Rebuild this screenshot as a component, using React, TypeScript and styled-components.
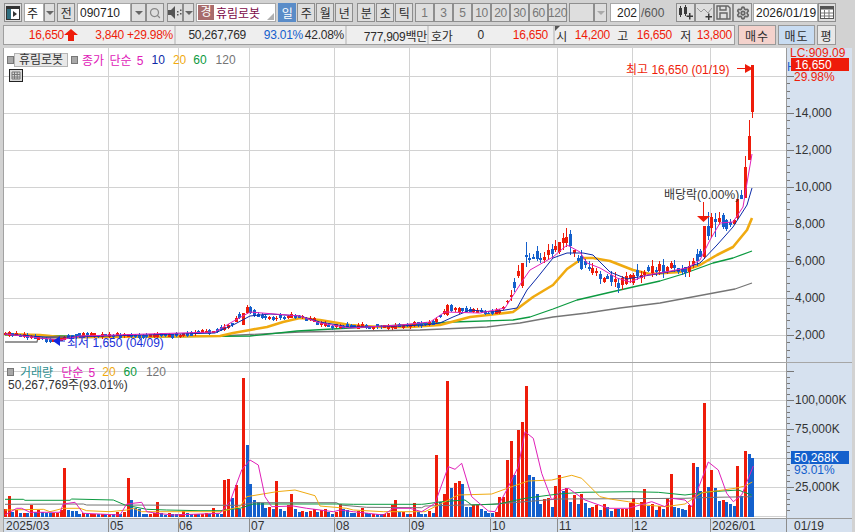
import React from 'react'
import styled, { createGlobalStyle } from 'styled-components'
import { Search, Settings } from 'lucide-react'

const GlobalStyle = createGlobalStyle`
  html, body { margin: 0; padding: 0; }
  body {
    background: #d2d2d2;
    font-family: "Liberation Sans", "Noto Sans CJK KR", sans-serif;
    font-size: 12px;
    color: #2c2c2c;
  }
  svg text { font-family: "Liberation Sans", "Noto Sans CJK KR", sans-serif; }
`

const RED = '#ee1c0a'
const BLUE = '#1460cc'
const MAGENTA = '#e020b8'
const NAVY = '#0c2aa8'
const ORANGE = '#f0aa10'
const GREEN = '#0c9a40'
const GRAY = '#757575'

const Screen = styled.div`
  width: 855px;
  height: 532px;
  overflow: hidden;
  display: flex;
  flex-direction: column;
  background: #d2d2d2;
`

const Toolbar = styled.div`
  display: flex;
  align-items: stretch;
  height: 19px;
  margin-top: 3px;
  padding-left: 4px;
`

const Btn = styled.div<{ $w: number; $ml?: number; $active?: boolean; $off?: boolean }>`
  width: ${p => p.$w}px;
  margin-left: ${p => p.$ml ?? 0}px;
  flex: none;
  box-sizing: border-box;
  display: flex;
  align-items: center;
  justify-content: center;
  border: 1px solid ${p => (p.$active ? '#5a8cc8' : '#8e8e8e')};
  background: ${p => (p.$active ? '#5a8cc8' : '#dedede')};
  color: ${p => (p.$active ? '#fff' : p.$off ? '#777' : '#2c2c2c')};
  font-size: 12px;
  letter-spacing: -0.4px;
  white-space: nowrap;
`

const Field = styled.div<{ $w: number; $ml?: number; $end?: boolean }>`
  width: ${p => p.$w}px;
  margin-left: ${p => p.$ml ?? 0}px;
  flex: none;
  box-sizing: border-box;
  display: flex;
  align-items: center;
  justify-content: ${p => (p.$end ? 'flex-end' : 'flex-start')};
  padding: 0 2px;
  background: #fff;
  border: 1px solid #a8a8a8;
  color: #222;
`

const Caret = styled.span<{ $pale?: boolean }>`
  width: 0;
  height: 0;
  border-left: 4px solid transparent;
  border-right: 4px solid transparent;
  border-top: 4px solid ${p => (p.$pale ? '#aaa' : '#666')};
`

const NameBox = styled.div`
  width: 80px;
  margin-left: 2px;
  flex: none;
  box-sizing: border-box;
  display: flex;
  align-items: center;
  gap: 2px;
  position: relative;
  background: #fff;
  border: 1px solid #a8a8a8;
  color: #7c0a48;
  &::after {
    content: '';
    position: absolute;
    right: 1px;
    bottom: 1px;
    border-left: 7px solid transparent;
    border-bottom: 7px solid #b0b0b0;
  }
`

const Badge = styled.span`
  width: 16px;
  height: 15px;
  margin-left: 1px;
  background: #a86c6c;
  color: #fff;
  text-align: center;
  line-height: 15px;
`

const PlainText = styled.span`
  margin-left: 1px;
  width: 34px;
  color: #555;
  display: flex;
  align-items: center;
  flex: none;
`

const QuoteRow = styled.div`
  display: flex;
  align-items: stretch;
  height: 20px;
  margin-top: 3px;
  padding-left: 3px;
`

const QuoteBar = styled.div`
  width: 732px;
  flex: none;
  box-sizing: border-box;
  display: flex;
  background: #eeeeee;
  border: 1px solid #9e9e9e;
`

const QuoteCell = styled.div<{ $w: number; $last?: boolean }>`
  width: ${p => p.$w}px;
  flex: none;
  box-sizing: border-box;
  display: flex;
  align-items: center;
  border-right: ${p => (p.$last ? 'none' : '2px solid #cfcfcf')};
  position: relative;
`

const Val = styled.span<{ $w: number; $c?: string; $left?: boolean }>`
  width: ${p => p.$w}px;
  flex: none;
  box-sizing: border-box;
  padding-left: ${p => (p.$left ? 2 : 0)}px;
  text-align: ${p => (p.$left ? 'left' : 'right')};
  color: ${p => p.$c ?? '#2c2c2c'};
  letter-spacing: -0.25px;
  white-space: nowrap;
`

const CornerMark = styled.span`
  position: absolute;
  left: 0;
  top: 0;
  border-right: 5px solid transparent;
  border-top: 5px solid #555;
`

const TradeBtn = styled.div<{ $bg: string; $w: number; $ml: number }>`
  width: ${p => p.$w}px;
  margin-left: ${p => p.$ml}px;
  flex: none;
  box-sizing: border-box;
  display: flex;
  align-items: center;
  justify-content: center;
  background: ${p => p.$bg};
  border: 1px solid #999;
  letter-spacing: 1px;
`

const ChartFrame = styled.div`
  flex: 1;
  margin-top: 3px;
  margin-left: 3px;
  margin-right: 3px;
  border-left: 1px solid #a2a2a2;
  display: flex;
  flex-direction: column;
  min-height: 0;
`

const Pane = styled.div<{ $h: number; $sep?: boolean }>`
  height: ${p => p.$h}px;
  flex: none;
  display: flex;
  position: relative;
  background: #fff;
  border-bottom: ${p => (p.$sep ? '1px solid #a6a6a6' : 'none')};
`

const Plot = styled.svg`
  display: block;
  width: 782px;
  height: 100%;
  flex: none;
`

const AxisSvg = styled.svg`
  display: block;
  width: 66px;
  height: 100%;
  flex: none;
  background: #d6e1ef;
  border-left: 1px solid #9a9a9a;
  box-sizing: border-box;
`

const DateStrip = styled.svg`
  display: block;
  width: 848px;
  height: 13px;
  flex: none;
  background: #d6e1ef;
  border-top: 1px solid #9a9a9a;
  box-sizing: content-box;
`

const Legend = styled.div<{ $top: number; $left: number }>`
  position: absolute;
  top: ${p => p.$top}px;
  left: ${p => p.$left}px;
  display: flex;
  align-items: center;
  gap: 6px;
  white-space: nowrap;
`

const Dot = styled.span`
  width: 5px;
  height: 6px;
  box-sizing: content-box;
  background: #a8a8a8;
  border: 1px solid #777;
  flex: none;
  margin-right: -2px;
`

const NameTag = styled.span`
  width: 54px;
  height: 14px;
  box-sizing: border-box;
  margin: 0 -3px 0 -4px;
  background: #e8e8e8;
  border: 1px solid #b4b4b4;
  text-align: center;
  line-height: 12px;
  color: #333;
`

const LegendText = styled.span<{ $c: string; $gap?: number }>`
  color: ${p => p.$c};
  margin-left: ${p => p.$gap ?? 0}px;
  word-spacing: 2px;
`

const TableIcon = styled.svg`
  position: absolute;
  top: 21px;
  left: 5px;
`

const Note = styled.div<{ $top: number; $left: number; $c?: string }>`
  position: absolute;
  top: ${p => p.$top}px;
  left: ${p => p.$left}px;
  color: ${p => p.$c ?? '#333'};
  white-space: nowrap;
`

/* volume bars read off the chart, + up day, - down day */
const VOL = [
  8, 21, -5, 7, -4, 4, -4, 12, -5, 7, -5, -4, -4, 4, 4, 7, 49, -7, -6, -6, -3, 4, -3, 3, 3, -3, 3, -3, 3, -3, 5, -3, 5, 39,
  -17, -9, -8, -3, -3, 3, 4, 15, -4, -2, 4, -3, -3, 3, 6, -4, -3, 3, -3, 3, 4, -3, 9, -3, -3, 37, 38, -19, 32, -8, 139, -72,
  -33, -17, -15, -14, -9, 10, -8, 36, -8, -6, 12, 23, -8, -5, 6, -5, 6, 8, -5, 7, 8, -5, -3, 5, 13, -8, -7, -4, -4, 6, 9, -4,
  -3, 3, -3, -3, 3, 4, 12, 17, -5, 5, -3, 3, 14, -5, -3, -3, 6, -4, 62, -15, 23, 136, -29, 34, 36, -33, -10, -10, 12, 12, -8,
  -6, -4, -4, 5, 20, 20, 57, 76, -42, 87, 95, 131, -42, -40, -23, -13, 18, 19, -10, 31, 42, -26, 29, -15, 22, -13, 23, -14,
  -9, 10, 12, -7, 13, -10, -6, 8, -8, 8, 8, 14, 19, -7, 15, 28, -11, 13, -7, 11, -8, 19, 43, -10, -9, -8, -7, 12, 54, -50,
  -26, 114, -30, 47, -29, -16, 17, -15, -13, -11, 51, -21, 66, -63, -59,
]
const barX = (i: number) => 5 + (i * 747.3) / (VOL.length - 1)

type Pt = [number, number]

const CLOSE: Pt[] = [
  [5, 335], [20, 335], [50, 340], [55, 342], [65, 337], [80, 335], [130, 336], [178, 335], [215, 331], [230, 325], [245, 311],
  [255, 314], [270, 318], [300, 316], [310, 320], [330, 326], [380, 327], [410, 325], [435, 323], [447, 309], [470, 310],
  [490, 314], [500, 312], [510, 298], [520, 270], [530, 258], [545, 258], [555, 246], [568, 240], [575, 255], [590, 268],
  [605, 278], [620, 283], [632, 278], [650, 269], [670, 268], [690, 267], [698, 258], [706, 240], [725, 222], [735, 218],
  [753, 100],
]

const lerp = (pts: Pt[], x: number) => {
  for (let k = 1; k < pts.length; k++) {
    if (x <= pts[k][0]) {
      const [x0, y0] = pts[k - 1]
      const [x1, y1] = pts[k]
      return y0 + ((y1 - y0) * (x - x0)) / (x1 - x0)
    }
  }
  return pts[pts.length - 1][1]
}
const noise = (i: number, s: number) => {
  const v = Math.sin(i * 12.9898 + s * 78.233) * 43758.5453
  return v - Math.floor(v)
}

// x, body top, body bottom, wick top, wick bottom, up
const BIG: [number, number, number, number, number, boolean][] = [
  [752.3, 65, 112, 65, 118, true],
  [748.6, 136, 160, 120, 160, true],
  [744.9, 167, 198, 156, 198, true],
  [740.9, 195, 199, 190, 199, false],
  [737.4, 199, 218, 199, 220, true],
  [733.4, 220, 224, 219, 225, true],
  [730, 222, 225, 219, 227, false],
  [726, 220, 229, 219, 231, false],
  [722.3, 215, 227, 213, 229, false],
  [718.3, 218, 222, 212, 225, true],
  [714.4, 219, 222, 213, 237, false],
  [711, 217, 228, 213, 238, true],
  [707, 226, 236, 212, 240, false],
  [703, 226, 257, 226, 259, true],
  [521, 263, 286, 263, 288, true],
  [525, 255, 257, 242, 267, false],
  [558, 242, 252, 242, 254, true],
  [562, 238, 243, 233, 250, true],
  [566, 237, 243, 228, 247, true],
  [569, 234, 246, 230, 255, false],
  [581.7, 256, 269, 250, 270, false],
  [446.7, 305, 315, 304, 316, true],
  [450.5, 305, 311, 304, 312, false],
  [241.6, 313, 325, 313, 325, true],
  [245.7, 307, 313, 305, 314, true],
  [249.5, 307, 313, 306, 314, false],
  [254, 310, 316, 309, 317, false],
]

const candles = VOL.map((v, i) => {
  const x = barX(i)
  const big = BIG.find(b => Math.abs(b[0] - x) < 1.9)
  if (big) return { x, top: big[1], bot: big[2], hi: big[3], lo: big[4], up: big[5] }
  const c = lerp(CLOSE, x)
  const amp = c < 300 ? 1.4 : 0.45
  const h = 0.8 + noise(i, 1) * 2.4 * amp
  const shift = (noise(i, 2) - 0.5) * 5 * amp
  return {
    x,
    top: c + shift - h,
    bot: c + shift + h,
    hi: c + shift - h - noise(i, 3) * 5 * amp,
    lo: c + shift + h + noise(i, 4) * 4 * amp,
    up: v > 0,
  }
})

const MA5: Pt[] = [
  [5, 334], [40, 338], [60, 340], [80, 336], [215, 332], [232, 322], [250, 312], [262, 313], [300, 316], [320, 323], [350, 328],
  [400, 325], [430, 322], [445, 312], [480, 313], [505, 308], [523, 280], [530, 270], [553, 257], [567, 245], [580, 252],
  [587, 263], [600, 268], [617, 278], [630, 282], [647, 275], [665, 272], [687, 268], [700, 260], [710, 240], [720, 223],
  [733, 222], [743, 207], [748, 177], [752, 154],
]
const MA10: Pt[] = [
  [5, 334], [45, 337], [70, 337], [215, 333], [235, 324], [250, 316], [270, 314], [300, 316], [320, 322], [350, 327], [400, 326],
  [425, 325], [440, 323], [453, 317], [470, 310], [493, 312], [517, 308], [527, 290], [537, 278], [553, 258], [567, 253],
  [583, 253], [593, 255], [610, 272], [627, 279], [650, 275], [680, 270], [700, 263], [717, 245], [733, 227], [747, 205],
  [752, 188],
]
const MA20: Pt[] = [
  [5, 334], [40, 335], [60, 337], [100, 337], [220, 336], [233, 333], [250, 330], [267, 327], [283, 322], [300, 318], [320, 320],
  [350, 325], [380, 327], [410, 327], [440, 325], [470, 317], [497, 314], [513, 312], [533, 297], [553, 285], [567, 269],
  [583, 258], [593, 258], [610, 261], [633, 270], [650, 274], [680, 272], [700, 265], [717, 255], [733, 247], [747, 230],
  [752, 218],
]
const MA60: Pt[] = [
  [5, 335], [130, 337], [250, 336], [297, 331], [350, 328], [420, 324], [453, 322], [513, 320], [530, 317], [553, 309],
  [577, 300], [607, 293], [633, 287], [660, 281], [683, 274], [713, 263], [733, 258], [752, 251],
]
const MA120: Pt[] = [
  [5, 342], [37, 342], [38, 338], [220, 336], [300, 332], [420, 330], [487, 327], [520, 323], [553, 317], [587, 313],
  [620, 308], [660, 303], [735, 289], [752, 283],
]

// volume averages traced from the reference at 3x
const v1 = (p: Pt[]): Pt[] => p.map(([x, y]) => [x / 3, 400 + y / 3])
const v2 = (p: Pt[]): Pt[] => p.map(([x, y]) => [425 + x / 3, 400 + y / 3])

const VMA5 = [
  ...v1([[15, 345], [50, 325], [65, 325], [90, 337], [180, 337], [190, 312], [225, 307], [250, 340], [360, 345], [380, 312], [425, 307], [440, 335], [470, 340], [520, 345], [660, 340], [690, 305], [725, 210], [750, 180], [775, 195], [795, 290], [815, 320], [880, 318], [920, 325], [1000, 335], [1020, 330], [1060, 335], [1150, 345], [1180, 325], [1230, 325], [1265, 335]]),
  ...v2([[-10, 335], [30, 310], [70, 200], [90, 208], [110, 190], [140, 290], [190, 333], [210, 335], [245, 270], [280, 200], [300, 95], [325, 115], [350, 220], [380, 300], [410, 270], [430, 265], [480, 300], [550, 325], [610, 325], [680, 305], [720, 320], [740, 295], [780, 300], [800, 320], [820, 265], [850, 186], [880, 210], [905, 280], [925, 305], [950, 285], [985, 198]]),
]
const VMA20 = [
  ...v1([[15, 330], [130, 328], [150, 335], [190, 325], [240, 325], [260, 332], [330, 335], [380, 330], [400, 325], [425, 335], [600, 335], [660, 335], [720, 320], [740, 290], [830, 275], [885, 270], [945, 287], [960, 318], [1040, 325], [1060, 330], [1150, 335], [1265, 335]]),
  ...v2([[0, 335], [60, 305], [100, 285], [200, 282], [260, 260], [310, 243], [380, 240], [440, 226], [470, 235], [525, 290], [560, 298], [610, 305], [660, 315], [720, 320], [780, 312], [830, 278], [880, 272], [930, 265], [960, 258], [982, 246]]),
]
const VMA60 = [
  ...v1([[15, 298], [70, 298], [75, 301], [210, 301], [215, 297], [340, 300], [375, 315], [440, 328], [500, 330], [600, 332], [660, 332], [720, 325], [760, 312], [1020, 312], [1060, 313], [1265, 313]]),
  ...v2([[0, 312], [50, 305], [120, 300], [140, 315], [220, 312], [300, 295], [400, 282], [470, 277], [620, 275], [700, 277], [780, 285], [860, 275], [940, 270], [980, 285]]),
]
const VMA120 = [
  ...v1([[15, 313], [250, 312], [260, 315], [720, 316], [760, 308], [1010, 308], [1020, 315], [1100, 322], [1265, 323]]),
  ...v2([[0, 318], [200, 313], [300, 305], [400, 297], [600, 296], [780, 295], [870, 292], [980, 290]]),
]

const GRID_X = [108.5, 178.5, 249.5, 334.5, 409.5, 490.5, 557.5, 632.5, 710.5]
const line = (p: Pt[]) => p.map(([x, y]) => `${x.toFixed(1)},${y.toFixed(1)}`).join(' ')

const Trace = ({ pts, c, w = 1 }: { pts: Pt[]; c: string; w?: number }) => (
  <polyline points={line(pts)} fill="none" stroke={c} strokeWidth={w} strokeLinejoin="round" />
)

const Grid = ({ ys, y0, y1 }: { ys: number[]; y0: number; y1: number }) => (
  <g stroke="#d2d2d2" strokeWidth={1} shapeRendering="crispEdges">
    {GRID_X.map(x => <line key={x} x1={x} x2={x} y1={y0} y2={y1} />)}
    {ys.map(y => <line key={y} x1={4} x2={786} y1={y + 0.5} y2={y + 0.5} />)}
  </g>
)

const PricePlot = () => (
  <Plot viewBox="4 48 782 314">
    <Grid ys={[76, 113, 150, 187, 224, 261, 298, 335]} y0={48} y1={362} />
    <Trace pts={MA120} c={GRAY} w={1.3} />
    <Trace pts={MA60} c={GREEN} w={1.3} />
    <Trace pts={MA20} c={ORANGE} w={2.6} />
    {candles.map((k, i) => (
      <g key={i} shapeRendering="crispEdges" fill={k.up ? RED : BLUE}>
        <rect x={Math.round(k.x)} y={k.hi} width={1} height={k.lo - k.hi} />
        <rect x={Math.round(k.x) - 1} y={k.top} width={3} height={Math.max(1, k.bot - k.top)} />
      </g>
    ))}
    <Trace pts={MA10} c={NAVY} />
    <Trace pts={MA5} c={MAGENTA} />
    <path d="M737 68.5H747" stroke={RED} strokeWidth={1} />
    <path d="M745 64L753 68.5L745 73Z" fill={RED} />
    <path d="M703.5 202V216" stroke={RED} strokeWidth={1} />
    <path d="M697 216H710L703.5 222Z" fill={RED} />
    <path d="M53 341L60 336V346Z" fill="#1028e0" />
    <path d="M58 341H65" stroke="#1028e0" strokeWidth={1} />
  </Plot>
)

const PriceAxis = () => {
  const minors = Array.from({ length: 40 }, (_, i) => 76 + i * 7.4).filter(y => y < 362)
  const labels: [number, string][] = [[113, '14,000'], [150, '12,000'], [187, '10,000'], [224, '8,000'], [261, '6,000'], [298, '4,000'], [335, '2,000']]
  return (
    <AxisSvg viewBox="787 48 65 314">
      <g stroke="#777" shapeRendering="crispEdges">
        {minors.map((y, i) => <line key={y} x1={787} x2={i % 5 === 0 ? 794 : 790} y1={y + 0.5} y2={y + 0.5} />)}
      </g>
      {labels.map(([y, t]) => (
        <text key={t} x={795} y={y + 4} fontSize={12} fill="#333">{t}</text>
      ))}
      <text x={790} y={57} fontSize={12} fill={RED}>LC:909.09</text>
      <text x={787} y={71} fontSize={12} fill={BLUE}>H</text>
      <rect x={791} y={58} width={58} height={13} fill={RED} />
      <text x={795} y={69} fontSize={12} fill="#fff">16,650</text>
      <text x={794} y={81} fontSize={12} fill={RED}>29.98%</text>
    </AxisSvg>
  )
}

const VolumePlot = () => (
  <Plot viewBox="4 363 782 155">
    <Grid ys={[371, 400, 429, 458, 487, 516]} y0={363} y1={518} />
    {VOL.map((v, i) => (
      <rect
        key={i}
        x={Math.round(barX(i)) - 1}
        y={516.6 - Math.abs(v)}
        width={3}
        height={Math.abs(v)}
        fill={v > 0 ? RED : BLUE}
        shapeRendering="crispEdges"
      />
    ))}
    <Trace pts={VMA120} c={GRAY} />
    <Trace pts={VMA60} c={GREEN} />
    <Trace pts={VMA20} c={ORANGE} />
    <Trace pts={VMA5} c={MAGENTA} />
  </Plot>
)

const VolumeAxis = () => {
  const minors = Array.from({ length: 25 }, (_, i) => 371 + i * 5.8).filter(y => y < 518)
  const labels: [number, string][] = [[400, '100,000K'], [429, '75,000K'], [487, '25,000K']]
  return (
    <AxisSvg viewBox="787 363 65 155">
      <g stroke="#777" shapeRendering="crispEdges">
        {minors.map((y, i) => <line key={y} x1={787} x2={i % 5 === 0 ? 794 : 790} y1={y + 0.5} y2={y + 0.5} />)}
      </g>
      {labels.map(([y, t]) => (
        <text key={t} x={795} y={y + 3.5} fontSize={12} fill="#333">{t}</text>
      ))}
      <rect x={791} y={451} width={58} height={13} fill={BLUE} />
      <text x={794} y={462} fontSize={12} fill="#fff">50,268K</text>
      <text x={794} y={474} fontSize={12} fill={BLUE}>93.01%</text>
    </AxisSvg>
  )
}

const DATES: [number, string][] = [
  [6, '2025/03'], [110, '05'], [179, '06'], [251, '07'], [336, '08'], [411, '09'], [492, '10'], [559, '11'], [634, '12'], [712, '2026/01'], [794, '01/19'],
]

const DateAxis = () => (
  <DateStrip viewBox="4 519 848 13">
    <g stroke="#8c8c8c" shapeRendering="crispEdges">
      {[...GRID_X, 786.5].map(x => <line key={x} x1={x} x2={x} y1={519} y2={532} />)}
    </g>
    {DATES.map(([x, t]) => (
      <text key={t} x={x} y={530} fontSize={12} fill="#333">{t}</text>
    ))}
  </DateStrip>
)

const ToolIcon = ({ kind }: { kind: string }) => (
  <svg width="15" height="15" viewBox="0 0 15 15">
    {kind === 'candle' && (
      <g fill="#3a3a3a">
        <rect x="1" y="3" width="3" height="7" />
        <rect x="2" y="1" width="1" height="11" />
        <rect x="6" y="2" width="3" height="7" />
        <rect x="7" y="0" width="1" height="11" />
        <path d="M11 8h1.500v2.500h2.500v1.500h-2.500v2.500h-1.500v-2.500h-2.500v-1.500h2.500z" />
      </g>
    )}
    {kind === 'line' && (
      <g>
        <path d="M0 3L4 7L7 4L11 8L15 3" fill="none" stroke="#999" />
        <path d="M11 8.500h1.500v2.500h2.500v1.500h-2.500v2.500h-1.500v-2.500h-2.500v-1.500h2.500z" fill="#3a3a3a" />
      </g>
    )}
    {kind === 'save' && (
      <g fill="none" stroke="#666" strokeWidth="1.400">
        <path d="M1 1H12L14 3V14H1Z" />
        <path d="M4 1V5H10V1M4 14V8H11V14" />
      </g>
    )}
  </svg>
)

const CalendarIcon = () => (
  <svg width="14" height="13" viewBox="0 0 14 13">
    <rect x="0.500" y="0.500" width="13" height="12" fill="#fff" stroke="#555" />
    <rect x="0.500" y="0.500" width="13" height="3" fill="#555" />
    <path d="M4.500 4V12M9 4V12M1 7H13M1 10H13" stroke="#777" />
  </svg>
)

const PanelIcon = () => (
  <svg width="14" height="14" viewBox="0 0 14 14">
    <rect x="0.500" y="0.500" width="13" height="13" fill="#fff" stroke="#333" />
    <rect x="1" y="1" width="12" height="2" fill="#333" />
    <rect x="1" y="3" width="4" height="10" fill="#2f6f80" />
    <path d="M7 5L11 8L7 11Z" fill="#333" />
  </svg>
)

const SpeakerIcon = () => (
  <svg width="14" height="13" viewBox="0 0 14 13">
    <path d="M0 4H3L7 0V13L3 9H0Z" fill="#555" />
    <path d="M9 5h1.500v1.500H9zM9 8h1.500v1.500H9zM12 3.500h1.500V5H12zM12 7h1.500v1.500H12z" fill="#555" />
  </svg>
)

const App = () => (
  <Screen>
    <GlobalStyle />
    <Toolbar>
      <Btn $w={18}><PanelIcon /></Btn>
      <Field $w={20} $ml={2}>주</Field>
      <Btn $w={11} $off><Caret /></Btn>
      <Btn $w={18} $ml={2}>전</Btn>
      <Field $w={54} $ml={2}>090710</Field>
      <Btn $w={15}><Caret /></Btn>
      <Btn $w={18}><Search size={12} color="#888" strokeWidth={2.5} /></Btn>
      <Btn $w={16} $ml={3}><SpeakerIcon /></Btn>
      <Btn $w={11}><Caret /></Btn>
      <NameBox><Badge>경</Badge>휴림로봇</NameBox>
      <Btn $w={18} $ml={2} $active>일</Btn>
      <Btn $w={18} $ml={1}>주</Btn>
      <Btn $w={18} $ml={1}>월</Btn>
      <Btn $w={18} $ml={1}>년</Btn>
      <Btn $w={18} $ml={4}>분</Btn>
      <Btn $w={18} $ml={1}>초</Btn>
      <Btn $w={18} $ml={1}>틱</Btn>
      {['1', '3', '5', '10', '20', '30', '60', '120'].map((t, i) => (
        <Btn key={t} $w={19} $off $ml={i === 0 ? 2 : 0}>{t}</Btn>
      ))}
      <Btn $w={25} $ml={2} />
      <Btn $w={13}><Caret $pale /></Btn>
      <Field $w={30} $ml={3} $end>202</Field>
      <PlainText>/600</PlainText>
      <Btn $w={19} $ml={1}><ToolIcon kind="candle" /></Btn>
      <Btn $w={19}><ToolIcon kind="line" /></Btn>
      <Btn $w={19}><ToolIcon kind="save" /></Btn>
      <Btn $w={19}><Settings size={14} color="#666" strokeWidth={3} /></Btn>
      <Field $w={65} $ml={1}>2026/01/19</Field>
      <Btn $w={18}><CalendarIcon /></Btn>
    </Toolbar>
    <QuoteRow>
      <QuoteBar>
        <QuoteCell $w={172}>
          <Val $w={60} $c={RED}>16,650</Val>
          <svg width="14" height="12" viewBox="0 0 14 12"><path d="M7 0L14 6H10V12H4V6H0Z" fill={RED} /></svg>
          <Val $w={46} $c={RED}>3,840</Val>
          <Val $w={49} $c={RED}>+29.98%</Val>
        </QuoteCell>
        <QuoteCell $w={171}>
          <Val $w={70}>50,267,769</Val>
          <Val $w={57} $c={BLUE}>93.01%</Val>
          <Val $w={41}>42.08%</Val>
        </QuoteCell>
        <QuoteCell $w={82}>
          <Val $w={80}>777,909백만</Val>
        </QuoteCell>
        <QuoteCell $w={126}>
          <Val $w={28} $left>호가</Val>
          <Val $w={27}>0</Val>
          <Val $w={64} $c={RED}>16,650</Val>
        </QuoteCell>
        <QuoteCell $w={179} $last>
          <CornerMark />
          <Val $w={12}>시</Val>
          <Val $w={43} $c={RED}>14,200</Val>
          <Val $w={18}>고</Val>
          <Val $w={44} $c={RED}>16,650</Val>
          <Val $w={19}>저</Val>
          <Val $w={41} $c={RED}>13,800</Val>
        </QuoteCell>
      </QuoteBar>
      <TradeBtn $bg="#f4d2cc" $w={38} $ml={3}>매수</TradeBtn>
      <TradeBtn $bg="#c8dcf2" $w={37} $ml={2}>매도</TradeBtn>
      <TradeBtn $bg="#e8e8e8" $w={19} $ml={2}>평</TradeBtn>
    </QuoteRow>
    <ChartFrame>
      <Pane $h={314} $sep>
        <PricePlot />
        <PriceAxis />
        <Legend $top={3} $left={3}>
          <Dot />
          <NameTag>휴림로봇</NameTag>
          <Dot />
          <LegendText $c={MAGENTA}>종가 단순 5</LegendText>
          <LegendText $c={NAVY} $gap={2}>10</LegendText>
          <LegendText $c={ORANGE} $gap={2}>20</LegendText>
          <LegendText $c={GREEN} $gap={1}>60</LegendText>
          <LegendText $c={GRAY} $gap={3}>120</LegendText>
        </Legend>
        <TableIcon width="14" height="13" viewBox="0 0 14 13">
          <rect x="0.500" y="0.500" width="13" height="12" fill="#d8d8d8" stroke="#222" />
          <path d="M3 3H11V10H3ZM5.500 3V10M8.200 3V10M3 5.500H11M3 8H11" fill="none" stroke="#777" />
        </TableIcon>
        <Note $top={12} $left={622} $c={RED}>최고 16,650 (01/19)</Note>
        <Note $top={137} $left={660}>배당락(0.00%)</Note>
        <Note $top={285} $left={63} $c="#1a30d8">최저 1,650 (04/09)</Note>
      </Pane>
      <Pane $h={155}>
        <VolumePlot />
        <VolumeAxis />
        <Legend $top={0} $left={3}>
          <Dot />
          <LegendText $c="#2f9090" $gap={2}>거래량</LegendText>
          <LegendText $c={MAGENTA} $gap={2}>단순 5</LegendText>
          <LegendText $c={ORANGE} $gap={1}>20</LegendText>
          <LegendText $c={GREEN} $gap={2}>60</LegendText>
          <LegendText $c={GRAY} $gap={3}>120</LegendText>
        </Legend>
        <Note $top={12} $left={4}>50,267,769주(93.01%)</Note>
      </Pane>
      <DateAxis />
    </ChartFrame>
  </Screen>
)

export default App
